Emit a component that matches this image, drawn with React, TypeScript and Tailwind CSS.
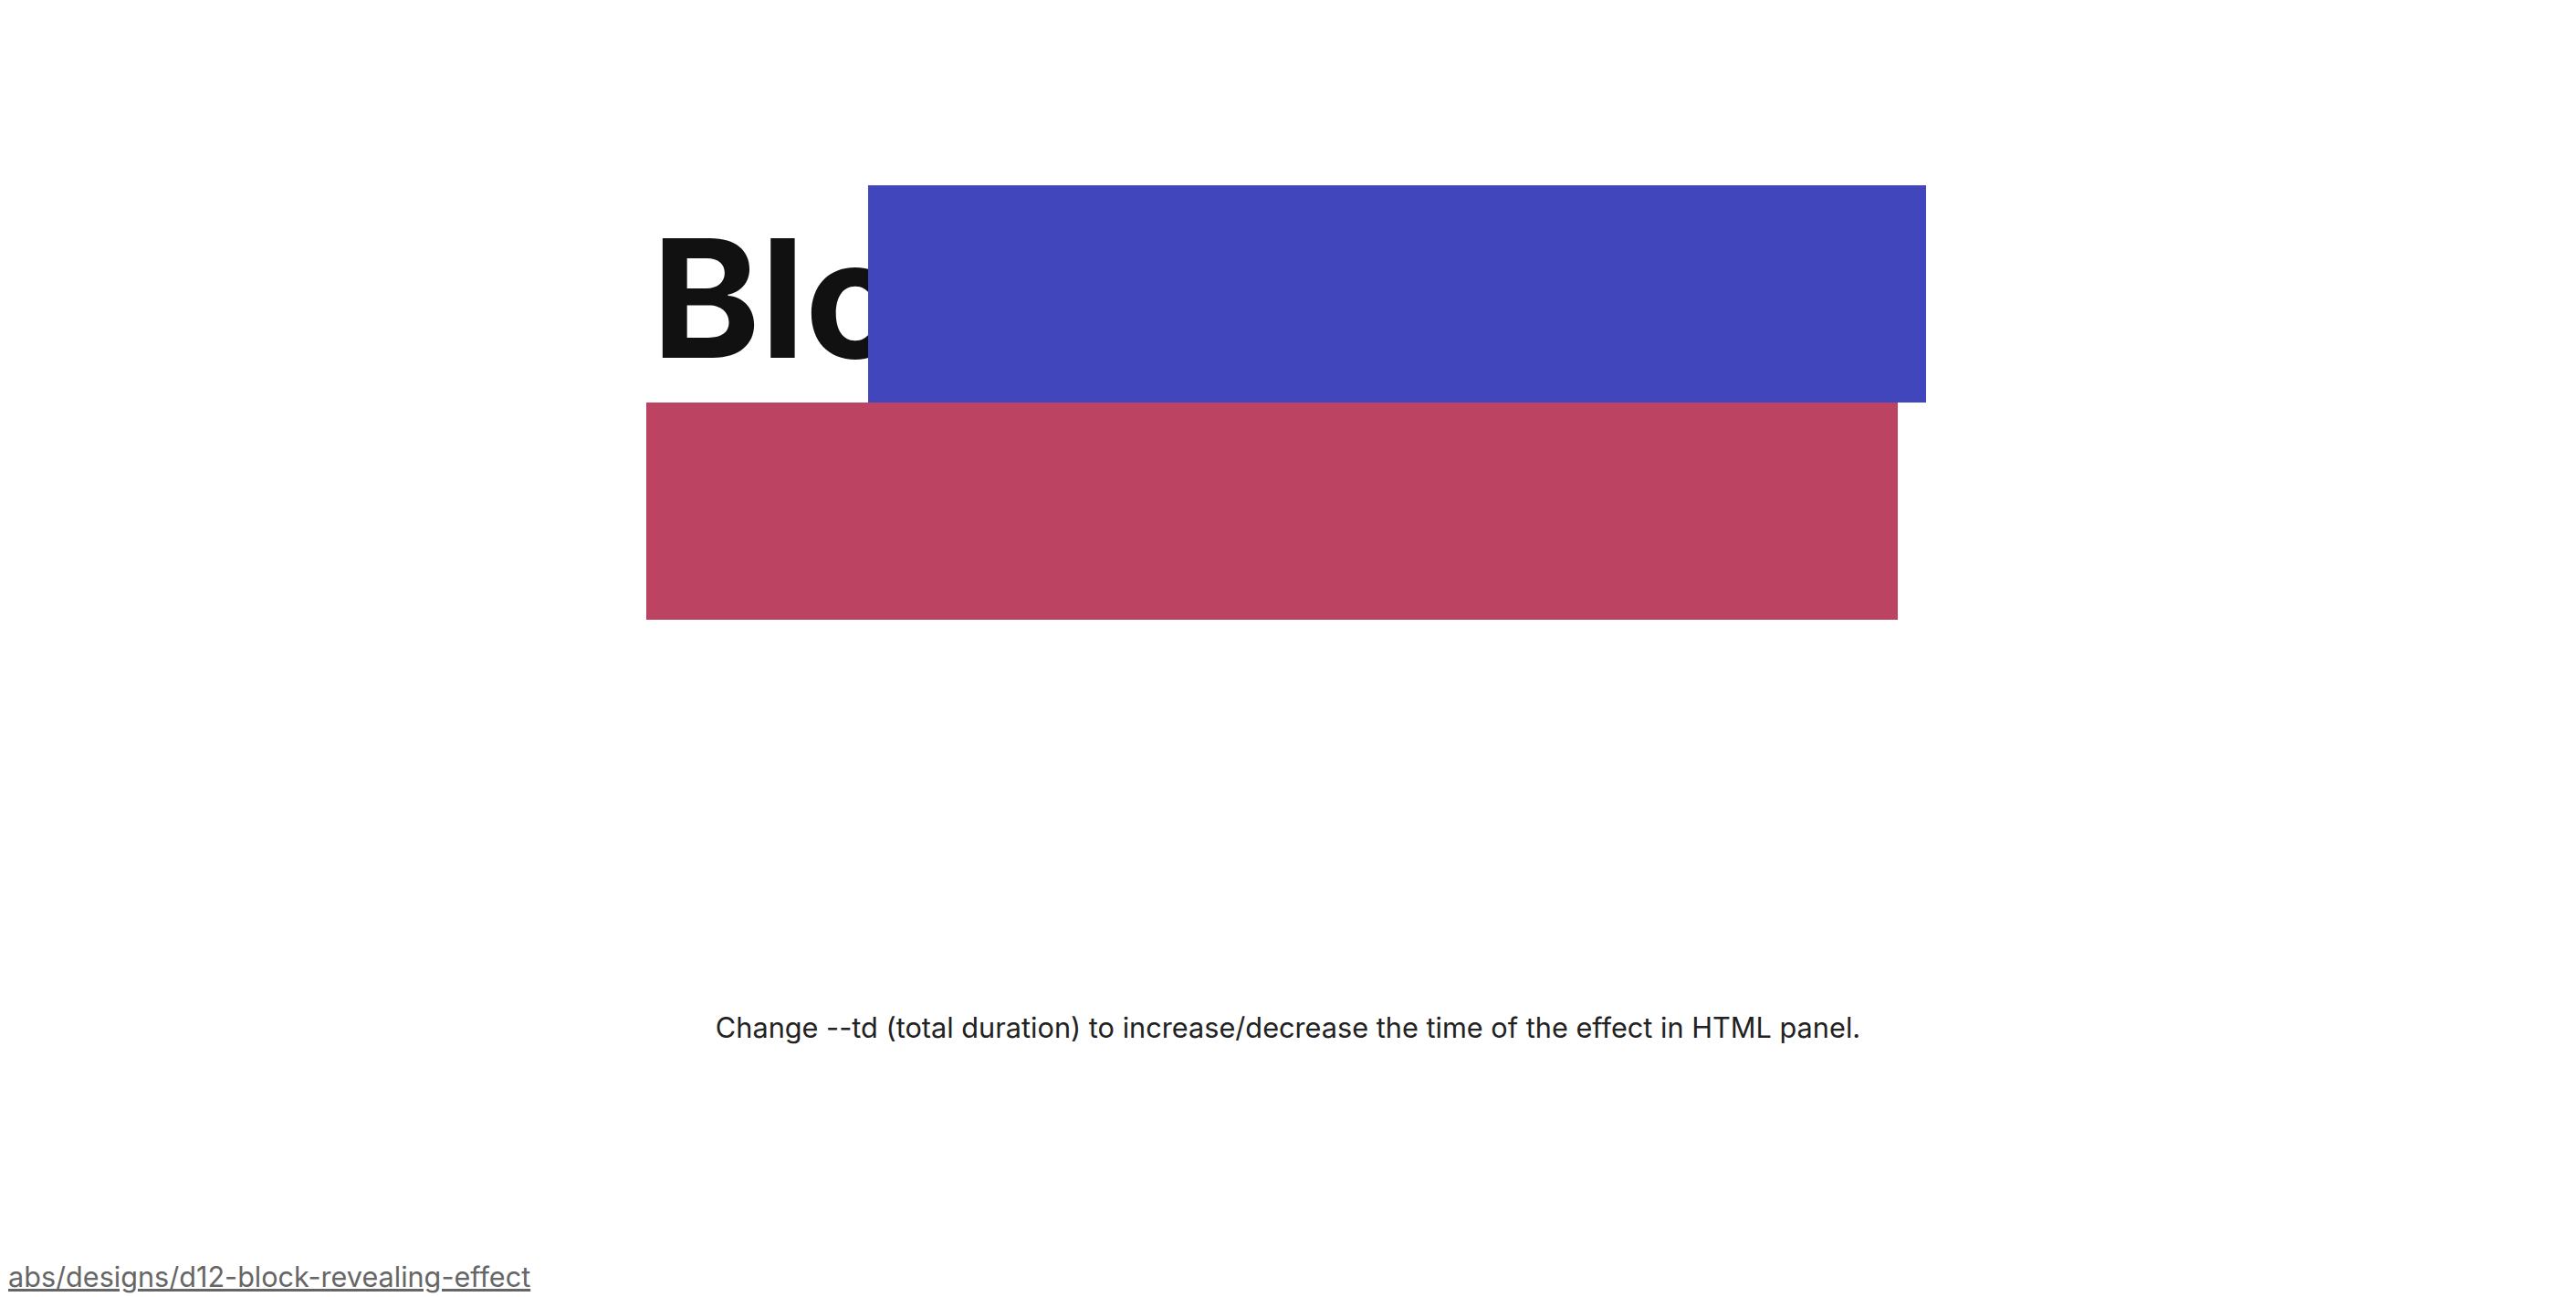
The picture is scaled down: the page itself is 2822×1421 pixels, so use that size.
export default function App() {
  return (
    <div className="relative flex h-[1421px] w-full flex-col overflow-hidden bg-white font-['Inter',sans-serif]">
      <div className="mx-auto mt-[203px] w-[1406px]">
        <h1 className="text-[180px] font-bold leading-[238px] text-[#111111]">
          <div className="relative h-[238px] overflow-hidden">
            <span className="block pl-[6px] pt-[5px]">Block</span>
            <div className="absolute left-[243px] top-0 h-[238px] w-[1159px] bg-[#4146bc]" />
          </div>
          <div className="relative h-[238px] overflow-hidden">
            <span className="block pl-[6px] pt-[5px] whitespace-nowrap">Revealing</span>
            <div className="absolute left-0 top-0 h-[238px] w-[1371px] bg-[#bd4362]" />
          </div>
        </h1>
      </div>

      <p className="mt-[424px] text-center text-[30.7px] text-[#222222]">
        Change --td (total duration) to increase/decrease the time of the effect in HTML panel.
      </p>

      <a
        href="#"
        className="absolute bottom-[-1px] left-[9px] text-[30.6px] text-[#666666] underline"
      >
        abs/designs/d12-block-revealing-effect
      </a>
    </div>
  );
}
